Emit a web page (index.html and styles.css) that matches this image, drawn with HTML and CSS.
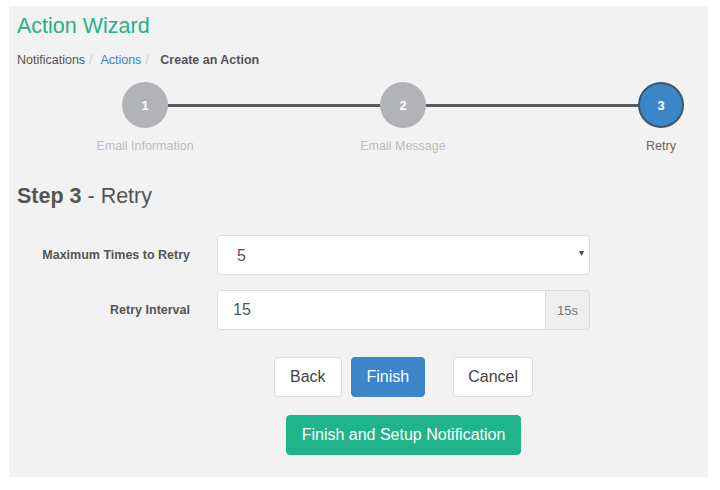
FILE: index.html
```html
<!DOCTYPE html>
<html lang="en">
<head>
  <meta charset="UTF-8" />
  <title>Action Wizard</title>
  <link rel="stylesheet" href="styles.css">
</head>
<body>

  <div class="panel">
    <h1 class="title">Action Wizard</h1>
    <div class="crumbs">
      <span>Notifications</span><span class="sep">/</span>
      <a href="#">Actions</a><span class="sep">/</span>
      <strong>Create an Action</strong>
    </div>

    <div class="stepper">
      <div class="step done">
        <div class="dot">1</div>
        <div class="step-label">Email Information</div>
      </div>
      <div class="step done">
        <div class="dot">2</div>
        <div class="step-label">Email Message</div>
      </div>
      <div class="step active">
        <div class="dot">3</div>
        <div class="step-label">Retry</div>
      </div>
    </div>

    <h2 class="step-title"><b>Step 3</b> - Retry</h2>

    <form class="form">
      <label for="retries">Maximum Times to Retry</label>
      <div class="select-wrap">
        <select id="retries">
          <option>5</option>
        </select>
        <span class="caret">&#9662;</span>
      </div>

      <label for="interval">Retry Interval</label>
      <div class="input-group">
        <input type="text" id="interval" value="15" />
        <span class="addon">15s</span>
      </div>

      <div class="actions">
        <div class="row">
          <button type="button" class="btn">Back</button>
          <button type="button" class="btn btn-blue">Finish</button>
          <button type="button" class="btn cancel">Cancel</button>
        </div>
        <button type="button" class="btn btn-green">Finish and Setup Notification</button>
      </div>
    </form>
  </div>

</body>
</html>
```

FILE: styles.css
```css
body {
  margin: 0;
  background-color: #fff;
  font-family: "Liberation Sans", Arial, sans-serif;
  color: #555;
}

.panel {
  margin: 6px 12px 0 9px;
  height: 471px;
  box-sizing: border-box;
  background-color: #f2f2f2;
  padding: 10px 8px 0 8px;
}

.title {
  margin: 0;
  font-size: 21.5px;
  font-weight: normal;
  line-height: 20px;
  color: #28ae89;
}

.crumbs {
  margin-top: 17px;
  font-size: 12.5px;
  line-height: 15px;
  color: #555;
}

.crumbs a {
  color: #3c83c9;
  text-decoration: none;
}

.crumbs .sep {
  color: #ccc;
  padding: 0 5px 0 4px;
}

.crumbs strong {
  margin-left: 3px;
}

.stepper {
  position: relative;
  display: flex;
  gap: 178px;
  margin: 14px 0 0 88px;
}

.stepper::before {
  content: "";
  position: absolute;
  left: 40px;
  top: 22px;
  width: 516px;
  height: 3px;
  background-color: #575b5f;
}

.step {
  position: relative;
  flex: 0 0 80px;
  min-width: 0;
  display: flex;
  flex-direction: column;
  align-items: center;
}

.dot {
  position: relative;
  width: 46px;
  height: 46px;
  flex-shrink: 0;
  border-radius: 50%;
  box-sizing: border-box;
  background-color: #b1b3b6;
  color: #fff;
  font-weight: bold;
  font-size: 13px;
  display: flex;
  align-items: center;
  justify-content: center;
}

.step.active .dot {
  background-color: #3b86c9;
  border: 2px solid #3f5568;
}

.step-label {
  margin-top: 11px;
  font-size: 12.5px;
  white-space: nowrap;
  color: #bdbdbd;
}

.step.active .step-label {
  color: #666;
}

.step-title {
  margin: 32px 0 0 0;
  font-size: 21.5px;
  font-weight: normal;
  line-height: 22px;
  color: #555;
}

.form {
  display: grid;
  grid-template-columns: 173px 373px;
  column-gap: 27px;
  row-gap: 15px;
  align-items: center;
  margin-top: 28px;
}

.form label {
  text-align: right;
  font-size: 12.5px;
  font-weight: bold;
  color: #555;
}

.select-wrap {
  position: relative;
}

select, input[type="text"] {
  display: block;
  width: 100%;
  height: 40px;
  box-sizing: border-box;
  border: 1px solid #ddd;
  border-radius: 4px;
  background-color: #fff;
  font-family: inherit;
  font-size: 16px;
  color: #555;
}

select {
  appearance: none;
  padding: 0 19px;
}

.caret {
  position: absolute;
  right: 6px;
  top: 12px;
  font-size: 10px;
  color: #444;
}

.input-group {
  display: flex;
}

.input-group input {
  border-radius: 4px 0 0 4px;
  padding: 0 15px;
}

.addon {
  flex: 0 0 44px;
  height: 40px;
  box-sizing: border-box;
  border: 1px solid #ddd;
  border-left: none;
  border-radius: 0 4px 4px 0;
  background-color: #eee;
  color: #777;
  font-size: 13px;
  display: flex;
  align-items: center;
  justify-content: center;
}

.actions {
  grid-column: 2;
  display: flex;
  flex-direction: column;
  align-items: center;
  gap: 18px;
  margin-top: 12px;
}

.row {
  display: flex;
  gap: 9px;
}

.btn {
  height: 40px;
  padding: 0 15px;
  border: 1px solid #ddd;
  border-radius: 4px;
  background-color: #fff;
  font-family: inherit;
  font-size: 16px;
  color: #444;
  cursor: pointer;
}

.btn.cancel {
  margin-left: 19px;
  padding: 0 14px;
}

.btn-blue {
  background-color: #3b86c9;
  border-color: #3b86c9;
  color: #fff;
}

.btn-green {
  background-color: #1fb48a;
  border-color: #1fb48a;
  color: #fff;
  padding: 0 15px;
}
```
